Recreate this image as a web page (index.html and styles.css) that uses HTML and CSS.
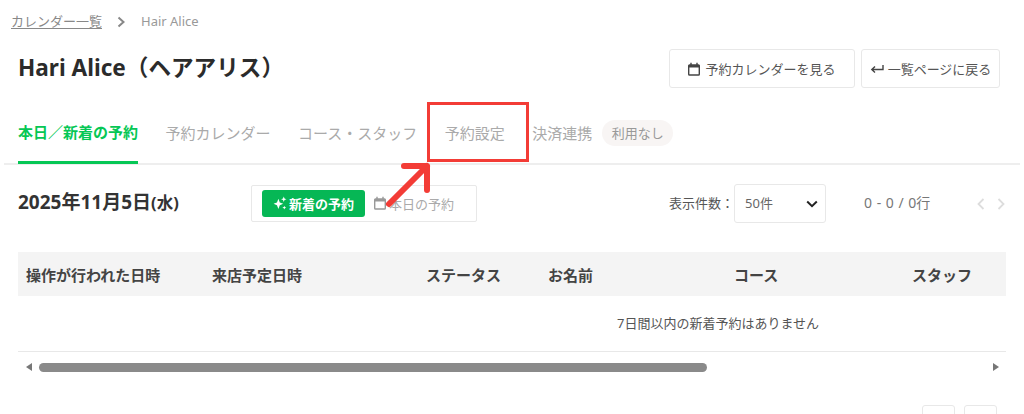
FILE: index.html
```html
<!DOCTYPE html>
<html lang="ja">
<head>
<meta charset="utf-8">
<title>Hari Alice</title>
<link rel="stylesheet" href="styles.css">
</head>
<body>
<div class="page">
  <nav class="crumbs"><a class="crumb-link">カレンダー一覧</a>
    <svg class="crumb-sep" width="10" height="12" viewBox="0 0 10 12"><path d="M2.5 1.5 7.5 6l-5 4.5" fill="none" stroke="#888" stroke-width="2"/></svg>
    <span>Hair Alice</span></nav>
  <header class="head">
    <h1 class="title">Hari Alice（ヘアアリス）</h1>
    <div class="head-actions">
      <button class="btn btn-cal"><svg width="12" height="14" viewBox="0 0 12 14"><path d="M1.5 3h9a.8.8 0 0 1 .8.8v8.4a.8.8 0 0 1-.8.8h-9a.8.8 0 0 1-.8-.8V3.800a.8.8 0 0 1 .8-.8Z" fill="none" stroke="#444" stroke-width="1.400"/><path d="M.7 3h10.600v2.500H.7z" fill="#444"/><path d="M3 .8v3M9 .8v3" stroke="#444" stroke-width="1.400"/></svg>予約カレンダーを見る</button>
      <button class="btn btn-back"><svg width="14" height="10" viewBox="0 0 14 10"><path d="M13 1v4.500H2.500M5 2.500 1.800 5.500 5 8.500" fill="none" stroke="#444" stroke-width="1.400"/></svg>一覧ページに戻る</button>
    </div>
  </header>
  <div class="tabs">
    <a class="tab tab-active">本日／新着の予約</a>
    <a class="tab">予約カレンダー</a>
    <a class="tab">コース・スタッフ</a>
    <a class="tab">予約設定</a>
    <a class="tab">決済連携<span class="pill">利用なし</span></a>
  </div>
  <section class="toolbar">
    <div class="date">2025年11月5日<span class="dow">(水)</span></div>
    <div class="toggle">
      <span class="toggle-on"><svg width="14" height="14" viewBox="0 0 13 13"><path d="M5 2.500 6.300 6 9.500 7.300 6.300 8.600 5 12 3.700 8.600.5 7.300 3.700 6Z" fill="#fff"/><path d="M10 .5l.7 1.800 1.800.7-1.800.7-.7 1.800-.7-1.800-1.800-.7 1.800-.7ZM10.500 9l.5 1.300 1.300.5-1.300.5-.5 1.300-.5-1.300-1.300-.5 1.300-.5Z" fill="#fff"/></svg>新着の予約</span>
      <span class="toggle-off"><svg width="12" height="14" viewBox="0 0 12 14"><path d="M1.500 3h9a.8.8 0 0 1 .8.8v8.400a.8.8 0 0 1-.8.8h-9a.8.8 0 0 1-.8-.8V3.800a.8.8 0 0 1 .8-.8Z" fill="none" stroke="#999" stroke-width="1.400"/><path d="M.7 3h10.600v2.500H.7z" fill="#999"/><path d="M3 .8v3M9 .8v3" stroke="#999" stroke-width="1.400"/></svg>本日の予約</span>
    </div>
    <div class="pager">
      <span class="pager-label">表示件数：</span>
      <div class="select"><span class="select-value">50件</span><svg width="12" height="8" viewBox="0 0 12 8"><path d="M1.200 1.500 6 6.200l4.800-4.700" fill="none" stroke="#222" stroke-width="2"/></svg></div>
      <span class="pager-count">0 - 0 / 0行</span>
      <span class="pager-arrows">
        <svg width="8" height="12" viewBox="0 0 8 12"><path d="M6.500 1 1.500 6l5 5" fill="none" stroke="#ddd" stroke-width="1.800"/></svg>
        <svg width="8" height="12" viewBox="0 0 8 12"><path d="M1.500 1 6.500 6l-5 5" fill="none" stroke="#ddd" stroke-width="1.800"/></svg>
      </span>
    </div>
  </section>
  <div class="table">
    <div class="thead">
      <span class="col">操作が行われた日時</span>
      <span class="col">来店予定日時</span>
      <span class="col">ステータス</span>
      <span class="col">お名前</span>
      <span class="col">コース</span>
      <span class="col">スタッフ</span>
    </div>
    <div class="tbody">7日間以内の新着予約はありません</div>
  </div>
  <div class="scrollbar">
    <svg width="8" height="10" viewBox="0 0 8 10"><path d="M7 1v8L1 5Z" fill="#777"/></svg>
    <div class="scroll-track"><div class="scroll-thumb"></div></div>
    <svg width="8" height="10" viewBox="0 0 8 10"><path d="M1 1v8l6-4Z" fill="#777"/></svg>
  </div>
  <div class="bottom-pager"><span class="page-btn"></span><span class="page-btn"></span></div>
</div>
<div class="callout-box"></div>
<svg class="callout-arrow" width="60" height="60" viewBox="0 0 60 60"><path d="M5 44 L43 6 M20 6 H43 V30" fill="none" stroke="#f33c36" stroke-width="6" stroke-linecap="round" stroke-linejoin="round"/></svg>
</body>
</html>
```
FILE: styles.css
```css
* { box-sizing: border-box; }
html, body { margin: 0; height: 414px; overflow: hidden; background: #fff; }
body { font-family: "Noto Sans", "Noto Sans CJK JP", sans-serif; color: #333; position: relative; }
.page { height: 414px; overflow: hidden; }
.crumbs { display: flex; align-items: center; height: 18px; margin-top: 12px; padding-left: 11px; font-size: 13px; color: #999; line-height: 18px; }
.crumb-link { color: #888; text-decoration: underline; text-underline-offset: 2px; }
.crumb-sep { margin: 1px 15px 0 14px; }
.head { display: flex; justify-content: space-between; align-items: center; margin-top: 19px; padding: 0 24px 0 18px; height: 39px; }
.title { margin: -1px 0 0; font-size: 22.6px; font-weight: 700; color: #2b2b2b; line-height: 34px; }
.head-actions { display: flex; gap: 6px; }
.btn { display: flex; align-items: center; justify-content: center; gap: 5px; height: 39px; padding: 0; font: inherit; font-size: 13px; color: #555; background: #fff; border: 1px solid #e8e8e8; border-radius: 3px; }
.btn-cal { width: 186px; }
.btn-back { width: 139px; gap: 4px; }
.tabs { display: flex; gap: 27.5px; height: 77px; margin: 0 4px; padding: 0 14px; border-bottom: 2px solid #eee; font-size: 15px; color: #aaa; }
.tab { display: flex; align-items: center; height: 75px; padding-top: 14px; line-height: 22px; white-space: nowrap; }
.tab-active { color: #06c755; font-weight: 700; border-bottom: 3px solid #06c755; height: 76px; }
.pill { margin-left: 10px; padding: 0 9.5px; height: 26px; line-height: 26px; border-radius: 13px; background: #f8f5f4; font-size: 13px; color: #999; }
.toolbar { display: flex; align-items: center; height: 39px; margin-top: 19px; padding-left: 18px; }
.date { width: 233px; padding-bottom: 5px; font-size: 19px; font-weight: 700; color: #333; }
.dow { font-size: 16.500px; }
.toggle { display: flex; align-items: center; width: 226px; height: 37px; padding-left: 10px; border: 1px solid #e8e8e8; border-radius: 2px; font-size: 13px; }
.toggle-on { display: flex; align-items: center; justify-content: center; gap: 2px; width: 103px; height: 27px; padding-bottom: 1px; background: #06b755; color: #fff; font-weight: 700; border-radius: 3px; }
.toggle-off { display: flex; align-items: center; gap: 3px; margin-left: 9px; padding-bottom: 1px; color: #aaa; }
.pager { display: flex; align-items: center; margin-left: 192px; font-size: 13px; color: #555; }
.pager-label { padding-bottom: 3px; }
.select { display: flex; align-items: center; justify-content: space-between; width: 92px; height: 39px; padding: 0 7px 0 10px; border: 1px solid #e8e8e8; border-radius: 3px; color: #666; }
.select-value { padding-bottom: 3px; }
.pager-count { margin-left: 38px; padding-bottom: 3px; font-size: 14px; word-spacing: 1px; color: #777; }
.pager-arrows { display: flex; gap: 12px; margin-left: 47px; }
.table { margin: 29px 18px 0; border-bottom: 1px solid #e8e8e8; }
.thead { display: grid; grid-template-columns: 186px 214px 122px 186px 178px 1fr; align-items: center; height: 44px; padding-left: 8px; background: #f4f4f4; font-size: 15px; font-weight: 700; color: #444; }
.col { white-space: nowrap; }
.tbody { height: 55px; line-height: 54px; padding-left: 599px; font-size: 13px; color: #555; }
.scrollbar { display: flex; align-items: center; gap: 6px; height: 10px; margin: 10px 24px 0 25px; }
.scroll-track { flex: 1; height: 9px; }
.scroll-thumb { width: 668px; height: 9px; background: #8a8a8a; border-radius: 5px; }
.bottom-pager { display: flex; justify-content: flex-end; gap: 9px; margin-top: 33px; padding-right: 27px; }
.page-btn { width: 33px; height: 33px; border: 1px solid #e8e8e8; border-radius: 3px; }
.callout-box { position: absolute; left: 427px; top: 102px; width: 102px; height: 60px; border: 3px solid #f33c36; }
.callout-arrow { position: absolute; left: 384px; top: 160px; }
```
